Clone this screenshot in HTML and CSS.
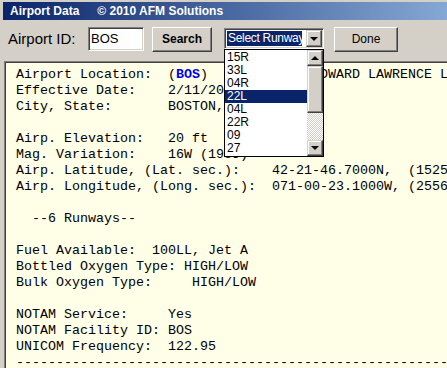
FILE: index.html
```html
<!DOCTYPE html>
<html>
<head>
<meta charset="utf-8">
<title>Airport Data</title>
<link rel="stylesheet" href="styles.css">
</head>
<body>
<div class="win">
  <div class="title"><span class="t1">Airport Data</span><span class="t2">© 2010 AFM Solutions</span></div>
  <div class="toolbar">
    <span class="lbl">Airport ID:</span>
    <div class="input">BOS</div>
    <div class="btn search">Search</div>
    <div class="select">
      <span class="sel-text">Select Runway</span>
      <span class="drop"><span class="tri-down"></span></span>
    </div>
    <div class="btn done">Done</div>
  </div>
<pre class="panel">Airport Location:  (<b class="id">BOS</b>)     GENERAL EDWARD LAWRENCE LOGAN INTL
Effective Date:    2/11/2010
City, State:       BOSTON, MA

Airp. Elevation:   20 ft
Mag. Variation:    16W (1985)
Airp. Latitude, (Lat. sec.):    42-21-46.7000N,  (152506.7000N)
Airp. Longitude, (Long. sec.):  071-00-23.1000W, (255623.1000W)

  --6 Runways--

Fuel Available:  100LL, Jet A
Bottled Oxygen Type: HIGH/LOW
Bulk Oxygen Type:     HIGH/LOW

NOTAM Service:     Yes
NOTAM Facility ID: BOS
UNICOM Frequency:  122.95
------------------------------------------------------------</pre>
  <div class="list">
    <ul class="items">
      <li>15R</li>
      <li>33L</li>
      <li>04R</li>
      <li class="hl">22L</li>
      <li>04L</li>
      <li>22R</li>
      <li>09</li>
      <li>27</li>
    </ul>
    <div class="sbar">
      <div class="sbtn"><span class="tri-up"></span></div>
      <div class="thumb"></div>
      <div class="track"></div>
      <div class="sbtn"><span class="tri-down"></span></div>
    </div>
  </div>
</div>
</body>
</html>
```

FILE: styles.css
```css
html, body {
  margin: 0;
  padding: 0;
}
body {
  width: 447px;
  height: 368px;
  overflow: hidden;
  background: #d4d0c8;
  font-family: "Liberation Sans", Arial, sans-serif;
}
.win {
  position: relative;
  height: 368px;
  box-sizing: border-box;
  padding: 2px 0 0 3px;
  overflow: hidden;
}
.title {
  display: flex;
  height: 18px;
  line-height: 18px;
  padding-left: 7px;
  background: linear-gradient(90deg, #0a246a 0, #a6caf0 560px);
  color: #fff;
  font-weight: bold;
  font-size: 12px;
  white-space: nowrap;
}
.t2 {
  margin-left: 18px;
}
.toolbar {
  display: flex;
  align-items: flex-start;
  height: 41px;
  box-sizing: border-box;
  padding: 7px 0 0 5px;
}
.lbl {
  width: 80px;
  font-size: 15px;
  line-height: 24px;
  color: #000;
}
.input {
  width: 56px;
  height: 24px;
  box-sizing: border-box;
  background: #fff;
  border: 1px solid;
  border-color: #808080 #fff #fff #808080;
  box-shadow: inset 1px 1px #404040, inset -1px -1px #d4d0c8;
  font-size: 13px;
  line-height: 21px;
  padding-left: 2px;
}
.btn {
  height: 25px;
  box-sizing: border-box;
  border: 1px solid;
  border-color: #fff #404040 #404040 #fff;
  box-shadow: inset -1px -1px #808080, inset 1px 1px #d4d0c8;
  font-size: 12px;
  line-height: 22px;
  text-align: center;
  color: #000;
}
.search {
  width: 60px;
  margin-left: 8px;
  font-weight: bold;
}
.done {
  width: 64px;
  margin-left: 10px;
}
.select {
  display: flex;
  width: 100px;
  height: 21px;
  margin: 1px 0 0 12px;
  box-sizing: border-box;
  background: #fff;
  border: 1px solid;
  border-color: #808080 #fff #fff #808080;
  box-shadow: inset 1px 1px #404040, inset -1px -1px #d4d0c8;
  padding: 2px;
}
.sel-text {
  width: 74px;
  overflow: hidden;
  white-space: nowrap;
  background: #0a246a;
  color: #fff;
  font-size: 12px;
  letter-spacing: -0.3px;
  line-height: 15px;
  padding-left: 1px;
}
.drop {
  margin-left: auto;
  width: 16px;
  box-sizing: border-box;
  margin-top: -1px;
  margin-bottom: -1px;
  margin-right: -1px;
  display: flex;
  align-items: center;
  justify-content: center;
  background: #d4d0c8;
  border: 1px solid;
  border-color: #d4d0c8 #404040 #404040 #d4d0c8;
  box-shadow: inset -1px -1px #808080, inset 1px 1px #fff;
}
.tri-down {
  width: 0;
  height: 0;
  border-left: 4px solid transparent;
  border-right: 4px solid transparent;
  border-top: 4px solid #000;
}
.tri-up {
  width: 0;
  height: 0;
  border-left: 4px solid transparent;
  border-right: 4px solid transparent;
  border-bottom: 4px solid #000;
}
.panel {
  margin: 0 0 0 1px;
  height: 320px;
  width: 480px;
  box-sizing: border-box;
  padding: 5px 0 0 11px;
  background: #ffffe8;
  border-top: 1px solid #808080;
  border-left: 1px solid #808080;
  box-shadow: inset 1px 1px #404040;
  font-family: "Liberation Mono", "Courier New", monospace;
  font-size: 13.33px;
  line-height: 16px;
  color: #000;
  white-space: pre;
  overflow: hidden;
}
.id {
  color: #0000ee;
  font-weight: bold;
}
.list {
  position: absolute;
  left: 224px;
  top: 49px;
  width: 100px;
  height: 108px;
  box-sizing: border-box;
  border: 1px solid #000;
  background: #fff;
  display: flex;
}
.items {
  list-style: none;
  margin: 0;
  padding: 1px 0 0 0;
  flex: 1;
}
.items li {
  height: 13px;
  line-height: 13px;
  font-size: 12px;
  padding-left: 2px;
  color: #000;
}
.items li.hl {
  background: #0a246a;
  color: #fff;
}
.sbar {
  width: 16px;
  display: flex;
  flex-direction: column;
}
.sbtn, .thumb {
  box-sizing: border-box;
  background: #d4d0c8;
  border: 1px solid;
  border-color: #d4d0c8 #404040 #404040 #d4d0c8;
  box-shadow: inset -1px -1px #808080, inset 1px 1px #fff;
}
.sbtn {
  height: 16px;
  display: flex;
  align-items: center;
  justify-content: center;
}
.thumb {
  height: 47px;
}
.track {
  flex: 1;
  background: repeating-conic-gradient(#d4d0c8 0 25%, #fff 0 50%) 0 0 / 2px 2px;
}
```
